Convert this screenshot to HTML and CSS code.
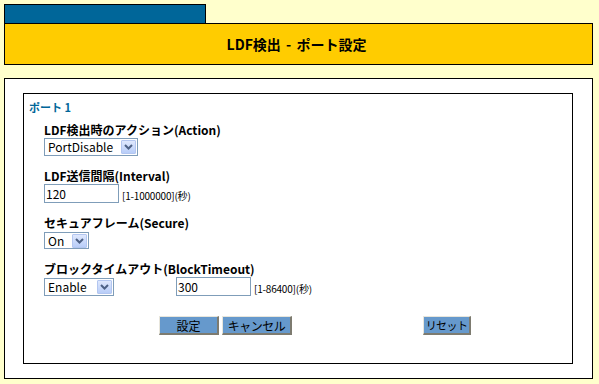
FILE: index.html
```html
<!DOCTYPE html>
<html lang="ja">
<head>
<meta charset="utf-8">
<title>LDF検出 - ポート設定</title>
<link rel="stylesheet" href="styles.css">
</head>
<body>
<div class="page">
  <div class="tab"></div>
  <div class="header"><h1 class="title">LDF検出 - ポート設定</h1></div>
  <div class="outer">
    <div class="inner">
      <div class="port-title">ポート 1</div>

      <div class="field">
        <div class="label">LDF検出時のアクション(Action)</div>
        <div class="select w-action">
          <span class="select-text">PortDisable</span>
          <span class="arrow"><svg width="9" height="6" viewBox="0 0 9 6"><path d="M1 1 L4.5 4.5 L8 1" fill="none" stroke="#4d6185" stroke-width="2"/></svg></span>
        </div>
      </div>

      <div class="field">
        <div class="label">LDF送信間隔(Interval)</div>
        <div class="row">
          <div class="input">120</div>
          <span class="range">[1-1000000](秒)</span>
        </div>
      </div>

      <div class="field">
        <div class="label">セキュアフレーム(Secure)</div>
        <div class="select w-secure">
          <span class="select-text">On</span>
          <span class="arrow"><svg width="9" height="6" viewBox="0 0 9 6"><path d="M1 1 L4.5 4.5 L8 1" fill="none" stroke="#4d6185" stroke-width="2"/></svg></span>
        </div>
      </div>

      <div class="field">
        <div class="label">ブロックタイムアウト(BlockTimeout)</div>
        <div class="row">
          <div class="select w-block">
            <span class="select-text">Enable</span>
            <span class="arrow"><svg width="9" height="6" viewBox="0 0 9 6"><path d="M1 1 L4.5 4.5 L8 1" fill="none" stroke="#4d6185" stroke-width="2"/></svg></span>
          </div>
          <div class="input timeout">300</div>
          <span class="range">[1-86400](秒)</span>
        </div>
      </div>

      <div class="buttons">
        <button class="btn btn-set">設定</button>
        <button class="btn btn-cancel">キャンセル</button>
        <button class="btn btn-reset">リセット</button>
      </div>
    </div>
  </div>
</div>
</body>
</html>
```

FILE: styles.css
```css
* { box-sizing: border-box; }
html, body { margin: 0; padding: 0; }
body {
  background: #ffffcc;
  font-family: "Noto Sans CJK JP", "DejaVu Sans", sans-serif;
  color: #000;
}
.page {
  padding: 4px 0 0 4px;
  width: 593px;
}
.tab {
  width: 202px;
  height: 19px;
  background: #006699;
  border: 1px solid #000;
  border-bottom: none;
}
.header {
  height: 42px;
  background: #ffcc00;
  border: 1px solid #000;
  display: flex;
  align-items: center;
  justify-content: center;
}
.title {
  margin: 0;
  font-size: 14px;
  font-weight: bold;
  line-height: 16px;
  padding-right: 4px;
  word-spacing: 2px;
}
.outer {
  margin-top: 13px;
  background: #fff;
  border: 1px solid #000;
  padding: 14px 19px 14px 18px;
}
.inner {
  height: 271px;
  border: 1px solid #000;
  padding-top: 6px;
}
.port-title {
  margin-left: 5px;
  font-size: 11px;
  font-weight: bold;
  line-height: 14px;
  color: #006699;
}
.field {
  margin-left: 20px;
  margin-top: 12px;
}
.port-title + .field { margin-top: 8px; }
.label {
  font-size: 12px;
  font-weight: bold;
  line-height: 16px;
  white-space: nowrap;
}
.row {
  display: flex;
  align-items: center;
}
.select {
  display: flex;
  align-items: center;
  justify-content: space-between;
  height: 18px;
  border: 1px solid #7f9db9;
  background: #fff;
  padding: 0 1px 0 3px;
}
.select-text {
  font-size: 12px;
  line-height: 16px;
}
.arrow {
  width: 15px;
  height: 14px;
  border: 1px solid #b3c6f0;
  border-radius: 1px;
  background: linear-gradient(#dfe8fd, #b8cdf8);
  display: flex;
  align-items: center;
  justify-content: center;
}
.w-action { width: 94px; }
.w-secure { width: 45px; height: 17px; margin-top: 1px; }
.w-block { width: 70px; }
.input {
  width: 75px;
  height: 19px;
  border: 1px solid #7f9db9;
  background: #fff;
  font-size: 12px;
  line-height: 17px;
  padding-left: 1px;
}
.timeout { margin-left: 62px; }
.range {
  font-size: 10px;
  margin-left: 3px;
  line-height: 14px;
  padding-top: 4px;
  letter-spacing: -0.2px;
}
.buttons {
  display: flex;
  margin-top: 20px;
  padding-left: 135px;
}
.btn {
  height: 19px;
  padding: 0;
  background: #6699cc;
  border-style: solid;
  border-width: 1px 2px 2px 1px;
  border-color: #e8e6dc #7d7b70 #7d7b70 #e8e6dc;
  font-family: "Noto Sans CJK JP", sans-serif;
  font-size: 12px;
  line-height: 15px;
  color: #000;
  white-space: nowrap;
  overflow: hidden;
}
.btn-set { width: 60px; }
.btn-cancel { width: 70px; margin-left: 3px; letter-spacing: -0.5px; }
.btn-reset { width: 48px; margin-left: 131px; font-size: 11px; letter-spacing: -0.6px; }
```
